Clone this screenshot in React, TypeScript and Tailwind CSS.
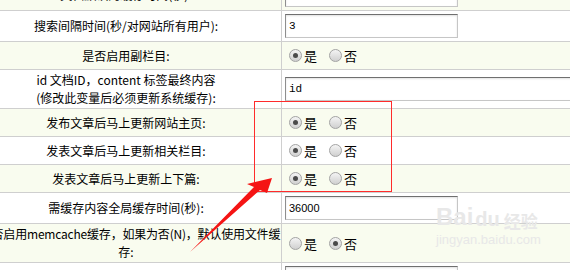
import type { ReactNode } from "react";

const cjk = "font-['Noto_Sans_CJK_SC',sans-serif]";

function Radio({ on }: { on?: boolean }) {
  return (
    <span className="w-[13px] h-[13px] rounded-full border border-[#a3a3a3] bg-linear-to-b from-[#f4f4f4] to-[#d0d0d0] flex items-center justify-center shrink-0">
      {on && <span className="w-[5px] h-[5px] rounded-full bg-[#4a4a4a]" />}
    </span>
  );
}

function YesNo({ yes = true }: { yes?: boolean }) {
  return (
    <div className={`flex items-center ml-[4px] text-[13px] leading-none text-black ${cjk}`}>
      <Radio on={yes} />
      <span className="ml-[2px]">是</span>
      <span className="ml-[12px]"><Radio on={!yes} /></span>
      <span className="ml-[2px]">否</span>
    </div>
  );
}

function Field({ value, wide, sans }: { value: string; wide?: boolean; sans?: boolean }) {
  return (
    <input
      readOnly
      value={value}
      className={`${wide ? "w-[400px]" : "w-[173px]"} h-[24px] border border-[#c6c6c6] border-t-[#6f6f6f] border-l-[#8e8e8e] shadow-[inset_0_1px_2px_rgba(0,0,0,0.12)] bg-white pl-[3px] text-black outline-none ${
        sans ? "font-['Liberation_Sans',sans-serif] text-[11px]" : "font-['Liberation_Mono',monospace] text-[11px]"
      }`}
    />
  );
}

function Row({ h, bg, label, children }: { h: string; bg: string; label: ReactNode; children?: ReactNode }) {
  return (
    <div className={`flex border-b border-[#cfcfcf] ${h} ${bg}`}>
      <div className={`w-[311px] shrink-0 border-r border-[#cfcfcf] flex items-center justify-center text-center whitespace-nowrap px-[5px] text-[12px] leading-[18px] text-black ${cjk}`}>
        <div>{label}</div>
      </div>
      <div className="flex-1 flex items-center pl-[3px]">{children}</div>
    </div>
  );
}

export default function App() {
  const cream = "bg-[#f9fcef]";
  const white = "bg-white";
  return (
    <div className="relative w-[570px] h-[270px] overflow-hidden bg-white">
      <div className="-mt-[20px] -ml-[29px] w-[720px]">
        <Row h="h-[31px]" bg={cream} label="文档默认的缓存时间(秒):">
          <Field value="" />
        </Row>
        <Row h="h-[31px]" bg={white} label="搜索间隔时间(秒/对网站所有用户):">
          <Field value="3" />
        </Row>
        <Row h="h-[28px]" bg={cream} label="是否启用副栏目:">
          <YesNo />
        </Row>
        <Row
          h="h-[39px]"
          bg={white}
          label={
            <>
              id 文档ID，content 标签最终内容
              <br />
              (修改此变量后必须更新系统缓存):
            </>
          }
        >
          <Field value="id" wide />
        </Row>
        <Row h="h-[28px]" bg={cream} label="发布文章后马上更新网站主页:">
          <YesNo />
        </Row>
        <Row h="h-[28px]" bg={white} label="发表文章后马上更新相关栏目:">
          <YesNo />
        </Row>
        <Row h="h-[28px]" bg={cream} label="发表文章后马上更新上下篇:">
          <YesNo />
        </Row>
        <Row h="h-[31px]" bg={white} label="需缓存内容全局缓存时间(秒):">
          <Field value="36000" sans />
        </Row>
        <Row
          h="h-[39px]"
          bg={cream}
          label={
            <>
              <span className="inline-block ml-[8px] tracking-[-0.2px]">是否启用memcache缓存，如果为否(N)，默认使用文件缓</span>
              <br />
              存:
            </>
          }
        >
          <YesNo yes={false} />
        </Row>
        <Row h="h-[31px]" bg={white} label="">
          <Field value="" />
        </Row>
      </div>

      {/* watermark */}
      <div className="absolute left-[436px] top-[205px] text-[#e8e8e8] select-none">
        <div className="flex items-end font-['Liberation_Sans',sans-serif] font-bold leading-none">
          <span className="text-[24px]">Bai</span>
          <span className="text-[20px] ml-[2px]">du</span>
          <span className={`text-[17px] ml-[4px] ${cjk}`}>经验</span>
        </div>
        <div className="font-['Liberation_Sans',sans-serif] text-[13px] leading-none mt-[4px]">jingyan.baidu.com</div>
      </div>

      {/* highlight box */}
      <div className="absolute left-[254px] top-[101px] w-[138px] h-[91px] border border-[#ff2b2b]" />

      {/* arrow */}
      <svg className="absolute left-0 top-0" width="570" height="270" viewBox="0 0 570 270">
        <polygon points="190,252 254,187 247,184 272,178 267,193 260,190" fill="#f51414" />
      </svg>
    </div>
  );
}
